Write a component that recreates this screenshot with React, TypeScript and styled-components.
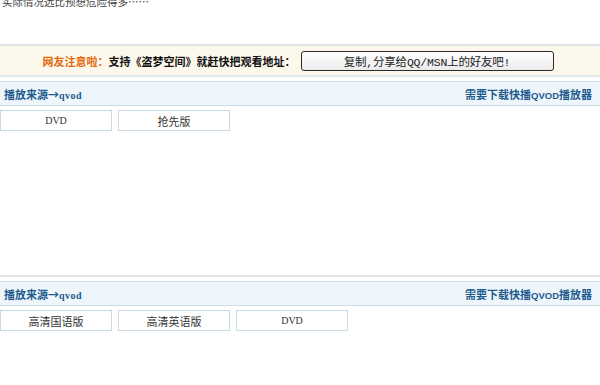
import styled, { createGlobalStyle } from 'styled-components';

const GlobalStyle = createGlobalStyle`
  html, body {
    margin: 0;
    padding: 0;
    background: #ffffff;
    overflow: hidden;
  }
  body {
    font-family: "Noto Sans CJK SC", "DejaVu Sans", sans-serif;
    color: #333;
  }
`;

const Page = styled.div`
  width: 600px;
  height: 385px;
  overflow: hidden;
`;

const Lead = styled.div`
  margin-top: -5px;
  padding-left: 2px;
  font-size: 10.5px;
  line-height: 14px;
  color: #444;
`;

const Notice = styled.div`
  margin-top: 35px;
  height: 29px;
  border-top: 2px solid #e1e6e8;
  background: #fdf8ec;
  display: flex;
  align-items: center;
  justify-content: center;
  gap: 3px;
  padding-right: 4px;
  font-size: 11px;
  font-weight: bold;
  color: #111;
`;

const Warn = styled.span`
  color: #e2690c;
`;

const CopyButton = styled.button`
  width: 253px;
  height: 20px;
  margin-left: 2px;
  padding: 0;
  border: 1px solid #2a2a2a;
  border-radius: 3px;
  background: linear-gradient(#ffffff, #ebebeb);
  font-family: "Liberation Mono", "Noto Sans CJK SC", monospace;
  font-size: 11.5px;
  font-weight: normal;
  color: #222;
  letter-spacing: -0.2px;
`;

const Section = styled.div<{ $minHeight: number }>`
  border-top: 2px solid #e1e8ec;
  padding-top: 4px;
  min-height: ${({ $minHeight }) => $minHeight}px;
`;

const SourceHeader = styled.div`
  height: 23px;
  display: flex;
  align-items: center;
  justify-content: space-between;
  padding: 0 8px 0 4px;
  background: #eef6fb;
  border-top: 1px solid #c9dde9;
  border-bottom: 1px solid #c9dde9;
  font-size: 11px;
  font-weight: bold;
  color: #1e5a8e;
`;

const Latin = styled.span`
  font-family: "Liberation Serif", serif;
  font-size: 10px;
  letter-spacing: 0.5px;
`;

const Caps = styled.span`
  font-family: "Liberation Sans Narrow", "Liberation Sans", sans-serif;
  font-size: 9.5px;
`;

const EpisodeRow = styled.div`
  display: flex;
  gap: 6px;
  padding-top: 4px;
`;

const Episode = styled.a`
  width: 110px;
  height: 19px;
  display: flex;
  align-items: center;
  justify-content: center;
  border: 1px solid #c6dbe6;
  background: #fff;
  font-size: 11px;
  color: #333;
  text-decoration: none;
`;

const DvdLabel = styled.span`
  font-family: "Liberation Serif", serif;
  font-size: 10px;
`;

function Header() {
  return (
    <SourceHeader>
      <span>
        播放来源→<Latin>qvod</Latin>
      </span>
      <span>
        需要下载快播<Caps>QVOD</Caps>播放器
      </span>
    </SourceHeader>
  );
}

function EpisodeLink({ name }: { name: string }) {
  return <Episode href="#">{name === 'DVD' ? <DvdLabel>DVD</DvdLabel> : name}</Episode>;
}

export default function App() {
  return (
    <Page>
      <GlobalStyle />
      <Lead>实际情况远比预想危险得多……</Lead>
      <Notice>
        <span>
          <Warn>网友注意啦：</Warn>支持《盗梦空间》就赶快把观看地址：
        </span>
        <CopyButton>复制,分享给QQ/MSN上的好友吧!</CopyButton>
      </Notice>
      <Section $minHeight={194}>
        <Header />
        <EpisodeRow>
          {['DVD', '抢先版'].map((n) => (
            <EpisodeLink key={n} name={n} />
          ))}
        </EpisodeRow>
      </Section>
      <Section $minHeight={60}>
        <Header />
        <EpisodeRow>
          {['高清国语版', '高清英语版', 'DVD'].map((n) => (
            <EpisodeLink key={n} name={n} />
          ))}
        </EpisodeRow>
      </Section>
    </Page>
  );
}
